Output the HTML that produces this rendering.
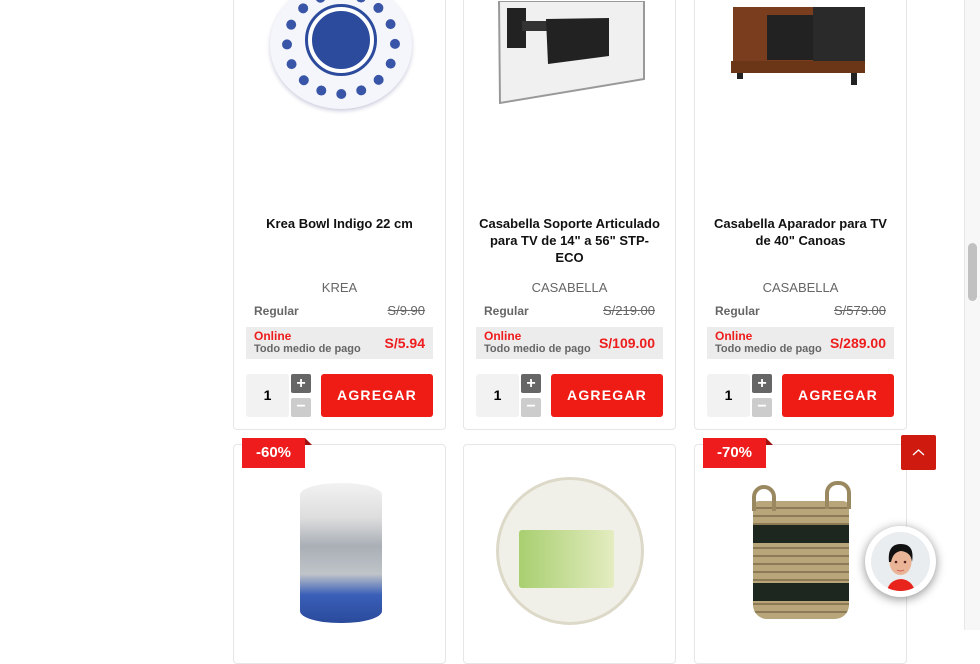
<!DOCTYPE html>
<html><head><meta charset="utf-8"><style>
*{margin:0;padding:0;box-sizing:border-box}
body{width:980px;height:630px;overflow:hidden;background:#fff;font-family:"Liberation Sans",sans-serif;position:relative}
.card{position:absolute;width:213px;border:1px solid #e6e6e6;border-radius:4px;background:#fff;overflow:hidden}
.r1{top:-20px;height:450px}
.r2{top:444px;height:220px}
.title{position:absolute;top:234px;left:15px;right:15px;text-align:center;font-size:13px;font-weight:bold;color:#111;line-height:17px}
.brand{position:absolute;top:299px;width:100%;text-align:center;font-size:13px;color:#666}
.reg{position:absolute;top:323px;left:20px;font-size:12px;color:#666;font-weight:bold}
.regp{position:absolute;top:322px;right:20px;font-size:13px;color:#666;text-decoration:line-through}
.pb{position:absolute;top:346px;left:12px;width:187px;height:32px;background:#ececec}
.pb .on{position:absolute;left:8px;top:2px;font-size:12px;color:#ee1c1c;font-weight:bold}
.pb .td{position:absolute;left:8px;top:16px;font-size:11px;color:#666;font-weight:bold}
.pb .pr{position:absolute;right:8px;top:8px;font-size:14px;color:#ee1c1c;font-weight:bold}
.qty{position:absolute;top:393px;left:12px;width:43px;height:43px;background:#f2f2f2;border-radius:3px;text-align:center;line-height:43px;font-size:14px;font-weight:bold}
.pl{position:absolute;top:393px;left:57px;width:20px;height:19px;background:#666;border-radius:2px;color:#fff;text-align:center;line-height:19px;font-size:16px;font-weight:bold}
.mi{position:absolute;top:417px;left:57px;width:20px;height:19px;background:#ccc;border-radius:2px;color:#fff;text-align:center;line-height:17px;font-size:16px;font-weight:bold}
.btn{position:absolute;top:393px;left:87px;width:112px;height:43px;background:#ee1c14;border-radius:3px;color:#fff;text-align:center;line-height:43px;font-size:14px;font-weight:bold;letter-spacing:1.2px}
.badge{position:absolute;top:438px;width:63px;height:30px;background:#ee1c1c;color:#fff;font-size:15px;font-weight:bold;text-align:center;line-height:30px}
.badge:after{content:"";position:absolute;right:-7px;top:0;border-left:7px solid #a01010;border-top:7px solid transparent}
</style></head><body>

<div class="card r1" style="left:233px">
  <div style="position:absolute;left:36px;top:0;width:142px;height:128px;border-radius:50%;background:#f4f6fb;box-shadow:0 2px 4px #ccd"></div>
  <div style="position:absolute;left:48px;top:8px;width:118px;height:110px;border-radius:50%;border:10px dotted #3955a8"></div>
  <div style="position:absolute;left:74px;top:26px;width:66px;height:66px;border-radius:50%;background:#2c4b9c;border:4px solid #fff;outline:3px solid #2c4b9c"></div>
  <div class="title">Krea Bowl Indigo 22 cm</div>
  <div class="brand">KREA</div>
  <div class="reg">Regular</div><div class="regp">S/9.90</div>
  <div class="pb"><div class="on">Online</div><div class="td">Todo medio de pago</div><div class="pr">S/5.94</div></div>
  <div class="qty">1</div><div class="pl">+</div><div class="mi">−</div><div class="btn">AGREGAR</div>
</div>

<div class="card r1" style="left:463px">
  <svg style="position:absolute;left:0;top:20px" width="213" height="110">
    <polygon points="35,0 180,0 180,78 36,102" fill="#f0f0f0" stroke="#999" stroke-width="2"/>
    <rect x="43" y="7" width="19" height="40" fill="#222"/>
    <rect x="58" y="20" width="30" height="10" fill="#333"/>
    <polygon points="82,18 145,17 145,55 84,63" fill="#222"/>
  </svg>
  <div class="title">Casabella Soporte Articulado para TV de 14" a 56" STP-ECO</div>
  <div class="brand">CASABELLA</div>
  <div class="reg">Regular</div><div class="regp">S/219.00</div>
  <div class="pb"><div class="on">Online</div><div class="td">Todo medio de pago</div><div class="pr">S/109.00</div></div>
  <div class="qty">1</div><div class="pl">+</div><div class="mi">−</div><div class="btn">AGREGAR</div>
</div>

<div class="card r1" style="left:694px">
  <svg style="position:absolute;left:0;top:20px" width="213" height="110">
    <rect x="38" y="6" width="90" height="55" fill="#7a3e1f"/>
    <rect x="72" y="14" width="50" height="45" fill="#222"/>
    <rect x="118" y="6" width="52" height="60" fill="#2a2a2a"/>
    <rect x="36" y="60" width="134" height="12" fill="#6b3518"/>
    <rect x="42" y="72" width="6" height="6" fill="#222"/><rect x="156" y="72" width="6" height="12" fill="#222"/>
  </svg>
  <div class="title">Casabella Aparador para TV de 40" Canoas</div>
  <div class="brand">CASABELLA</div>
  <div class="reg">Regular</div><div class="regp">S/579.00</div>
  <div class="pb"><div class="on">Online</div><div class="td">Todo medio de pago</div><div class="pr">S/289.00</div></div>
  <div class="qty">1</div><div class="pl">+</div><div class="mi">−</div><div class="btn">AGREGAR</div>
</div>

<div class="card r2" style="left:233px">
  <div style="position:absolute;left:66px;top:38px;width:82px;height:140px;border-radius:40px/12px;background:linear-gradient(#f2f2f2 0%,#ddd 25%,#a9afb6 45%,#bfc4c8 65%,#3a5fb8 80%,#2a4a9c 100%)"></div>
</div>
<div class="card r2" style="left:463px">
  <div style="position:absolute;left:32px;top:32px;width:148px;height:148px;border-radius:50%;background:#f1f0e8;border:3px solid #ddd9c8"></div>
  <div style="position:absolute;left:55px;top:85px;width:95px;height:58px;background:linear-gradient(90deg,#a8cf70,#e4ecc0);border-radius:3px"></div>
</div>
<div class="card r2" style="left:694px">
  <div style="position:absolute;left:58px;top:56px;width:96px;height:118px;border-radius:6px 6px 14px 14px;background:repeating-linear-gradient(#b9a57a 0 6px,#8b7a55 6px 8px)"></div>
  <div style="position:absolute;left:58px;top:80px;width:96px;height:18px;background:#1e2620"></div>
  <div style="position:absolute;left:58px;top:138px;width:96px;height:18px;background:#1e2620"></div>
  <div style="position:absolute;left:57px;top:40px;width:24px;height:26px;border:4px solid #9a8860;border-bottom:none;border-radius:12px 12px 0 0"></div>
  <div style="position:absolute;left:130px;top:36px;width:26px;height:28px;border:4px solid #9a8860;border-bottom:none;border-radius:12px 12px 0 0"></div>
</div>
<div class="badge" style="left:242px">-60%</div>
<div class="badge" style="left:703px">-70%</div>

<div style="position:absolute;left:901px;top:435px;width:35px;height:35px;background:#cf1a10;border-radius:2px">
  <svg width="35" height="35"><polyline points="12,20 17.5,15 23,20" fill="none" stroke="#fff" stroke-width="1.3"/></svg>
</div>

<div style="position:absolute;left:865px;top:526px;width:71px;height:71px;border-radius:50%;background:#fff;box-shadow:0 2px 10px rgba(0,0,0,.45);overflow:hidden">
  <div style="position:absolute;left:6px;top:6px;width:59px;height:59px;border-radius:50%;background:#e9edef;overflow:hidden">
    <svg width="59" height="59">
      <path d="M16 59 Q18 48 30 47 Q41 48 44 59Z" fill="#e8231c"/>
      <ellipse cx="29.5" cy="30" rx="11" ry="13" fill="#e9b596"/>
      <path d="M18 30 Q16 12 30 12 Q44 12 41 30 Q40 20 30 19 Q22 20 20 30Z" fill="#111"/>
      <circle cx="25" cy="30" r="1.3" fill="#522"/><circle cx="34" cy="30" r="1.3" fill="#522"/>
      <path d="M26 38 Q29.5 40 33 38" stroke="#c55" fill="none"/>
    </svg>
  </div>
</div>

<div style="position:absolute;left:964px;top:0;width:16px;height:630px;background:#f7f7f7;border-left:1px solid #e8e8e8"></div>
<div style="position:absolute;left:968px;top:243px;width:9px;height:58px;background:#c1c1c1;border-radius:5px"></div>
</body></html>
